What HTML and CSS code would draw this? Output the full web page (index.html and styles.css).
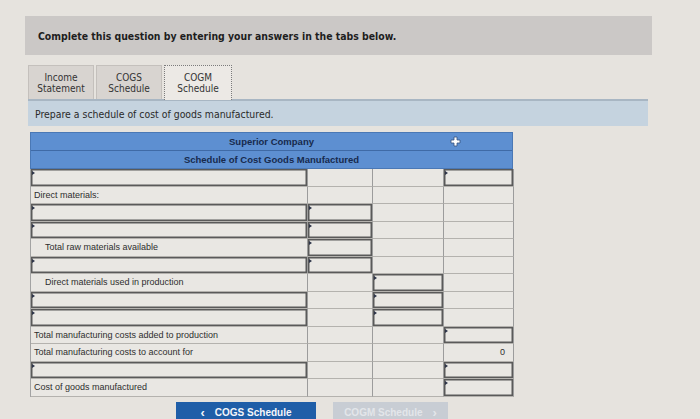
FILE: index.html
```html
<!DOCTYPE html>
<html>
<head>
<meta charset="utf-8">
<link rel="stylesheet" href="styles.css">
</head>
<body>
<div class="page">
  <div class="banner">Complete this question by entering your answers in the tabs below.</div>

  <div class="tabs">
    <div class="tab">Income<br>Statement</div>
    <div class="tab">COGS<br>Schedule</div>
    <div class="tab active">COGM<br>Schedule</div>
  </div>

  <div class="instructions">Prepare a schedule of cost of goods manufactured.</div>

  <div class="sheet">
    <div class="sheet-head">
      <div class="head-row">Superior Company</div>
      <div class="head-row">Schedule of Cost Goods Manufactured</div>
      <span class="add-btn">
        <svg width="11" height="11" viewBox="0 0 11 11"><path d="M4 1h3v3h3v3H7v3H4V7H1V4h3z" fill="#fff" stroke="#35527e" stroke-width="0.8" stroke-linejoin="round"/></svg>
      </span>
    </div>
    <div class="grid">
      <div class="cell inp"></div><div class="cell"></div><div class="cell"></div><div class="cell inp"></div>

      <div class="cell label">Direct materials:</div><div class="cell"></div><div class="cell"></div><div class="cell"></div>

      <div class="cell inp"></div><div class="cell inp"></div><div class="cell"></div><div class="cell"></div>

      <div class="cell inp"></div><div class="cell inp"></div><div class="cell"></div><div class="cell"></div>

      <div class="cell label indent">Total raw materials available</div><div class="cell inp"></div><div class="cell"></div><div class="cell"></div>

      <div class="cell inp"></div><div class="cell inp"></div><div class="cell"></div><div class="cell"></div>

      <div class="cell label indent">Direct materials used in production</div><div class="cell"></div><div class="cell inp"></div><div class="cell"></div>

      <div class="cell inp"></div><div class="cell"></div><div class="cell inp"></div><div class="cell"></div>

      <div class="cell inp"></div><div class="cell"></div><div class="cell inp"></div><div class="cell"></div>

      <div class="cell label">Total manufacturing costs added to production</div><div class="cell"></div><div class="cell"></div><div class="cell inp"></div>

      <div class="cell label">Total manufacturing costs to account for</div><div class="cell"></div><div class="cell"></div><div class="cell num">0</div>

      <div class="cell inp"></div><div class="cell"></div><div class="cell"></div><div class="cell inp"></div>

      <div class="cell label">Cost of goods manufactured</div><div class="cell"></div><div class="cell"></div><div class="cell inp"></div>
    </div>
  </div>

  <div class="nav">
    <button class="nav-btn prev"><span class="chev">&lsaquo;</span>COGS Schedule</button>
    <button class="nav-btn next">COGM Schedule<span class="chev right">&rsaquo;</span></button>
  </div>
</div>
</body>
</html>
```

FILE: styles.css
```css
html, body {
  margin: 0;
  padding: 0;
  background: #e6e3de;
  height: 100%;
  overflow: hidden;
}

body {
  font-family: "Liberation Sans", Arial, sans-serif;
  color: #2b2b2b;
}

.page {
  padding: 16px 0 0 25px;
}

.banner {
  width: 614px;
  height: 39px;
  padding-left: 13px;
  background: #cbc8c6;
  display: flex;
  align-items: center;
  font-family: "DejaVu Sans Condensed", "DejaVu Sans", sans-serif;
  font-weight: bold;
  font-size: 10.4px;
  color: #1e1e1e;
}

.tabs {
  display: flex;
  gap: 2px;
  margin: 10px 0 0 3px;
  position: relative;
  z-index: 1;
}

.tab {
  width: 64px;
  height: 33px;
  border: 1px solid #c4c0bc;
  border-bottom: none;
  background: #d8d4d0;
  display: flex;
  align-items: center;
  justify-content: center;
  text-align: center;
  font-family: "DejaVu Sans Condensed", "DejaVu Sans", sans-serif;
  font-size: 10px;
  line-height: 11px;
  color: #333;
}

.tab.active {
  width: 66px;
  height: 34px;
  margin-bottom: -2px;
  border: 1px dotted #7b7b7b;
  border-bottom: none;
  background: #ece9e5;
}

.instructions {
  width: 613px;
  height: 25px;
  margin-left: 3px;
  padding-left: 7px;
  border-top: 2px solid #a8b6c3;
  background: #c5d3df;
  display: flex;
  align-items: center;
  font-family: "DejaVu Sans Condensed", "DejaVu Sans", sans-serif;
  font-size: 10.4px;
  color: #2a2a2a;
}

.sheet {
  width: 483px;
  margin: 6px 0 0 5px;
}

.sheet-head {
  position: relative;
  background: #5d8fd1;
  border: 1px solid #4a78b5;
}

.head-row {
  height: 17px;
  display: flex;
  align-items: center;
  justify-content: center;
  font-weight: bold;
  font-size: 9.5px;
  color: #172a4d;
}

.head-row + .head-row {
  border-top: 1px solid #3f6aa6;
}

.add-btn {
  position: absolute;
  left: 419px;
  top: 3px;
  width: 11px;
  height: 11px;
  display: block;
}

.add-btn svg {
  display: block;
}

.grid {
  display: grid;
  grid-template-columns: 277px 65px 71px 70px;
  grid-auto-rows: 17.5px;
  border-left: 1px solid #a3a3a3;
}

.cell {
  position: relative;
  background: #e9e7e3;
  border-right: 1px solid #9c9c9c;
  border-bottom: 1px solid #b4b2ae;
  font-size: 9px;
  color: #2e2e2e;
  display: flex;
  align-items: center;
  padding: 0 3px;
  white-space: nowrap;
}

.cell.indent {
  padding-left: 14px;
}

.cell.num {
  justify-content: flex-end;
  padding-right: 8px;
  font-size: 9px;
}

.cell.inp {
  box-shadow: inset 0 0 0 1.5px #5a5a5a;
}

.cell.inp::before {
  content: "";
  position: absolute;
  left: 1px;
  top: 2px;
  border-left: 3px solid #2d3448;
  border-top: 2px solid transparent;
  border-bottom: 2px solid transparent;
}

.nav {
  display: flex;
  gap: 17px;
  margin: 5px 0 0 151px;
}

.nav-btn {
  height: 22px;
  border: none;
  padding: 0;
  font-family: "Liberation Sans", Arial, sans-serif;
  font-weight: bold;
  font-size: 10px;
  display: flex;
  align-items: center;
  justify-content: center;
}

.nav-btn.prev {
  width: 140px;
  background: #1f5ea8;
  color: #f4f6fa;
}

.nav-btn.next {
  width: 115px;
  background: #c8cdd4;
  color: #e3e6ea;
}

.chev {
  font-size: 13px;
  margin-right: 10px;
  line-height: 1;
}

.chev.right {
  margin: 0 0 0 10px;
}
```
